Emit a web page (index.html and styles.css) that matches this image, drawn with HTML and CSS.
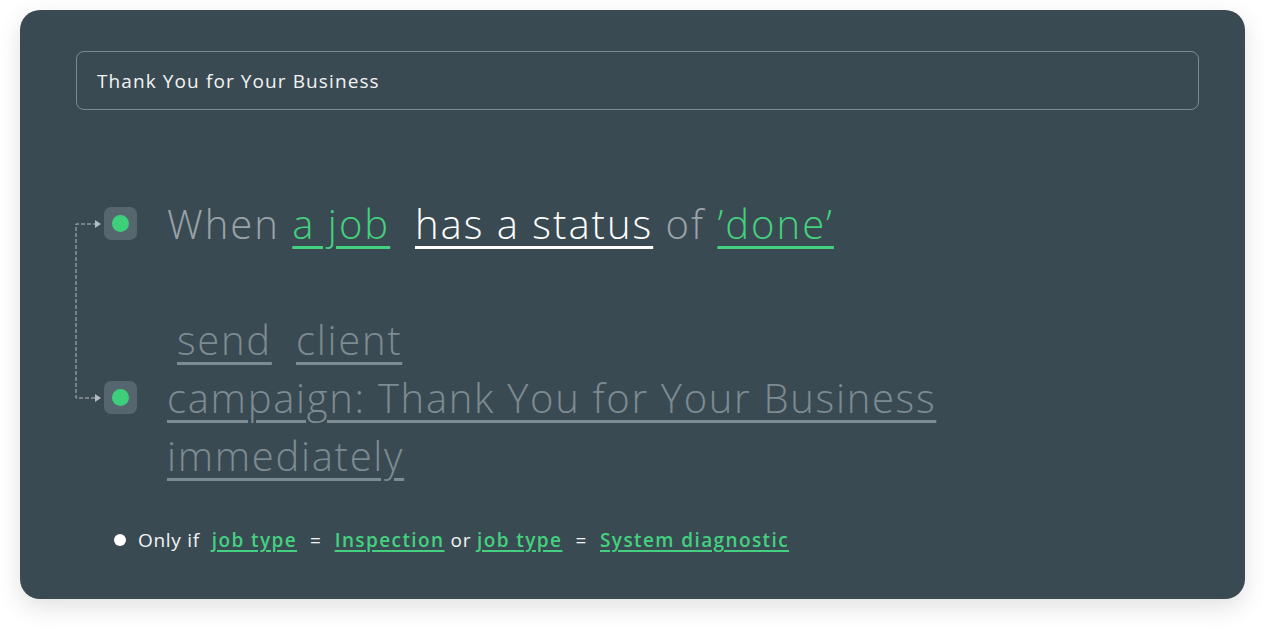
FILE: index.html
```html
<!DOCTYPE html>
<html lang="en">
<head>
    <meta charset="UTF-8">
    <meta name="viewport" content="width=device-width, initial-scale=1.0">
    <title>Automation - Thank You for Your Business</title>
    <link rel="stylesheet" href="styles.css">
</head>
<body>
    <div class="card">
        <div class="name-field">Thank You for Your Business</div>

        <div class="flow">
            <svg class="connector" width="40" height="190" viewBox="0 0 40 190">
                <path d="M27 8 H6 V182 H25" fill="none" stroke="#b3bbbf" stroke-width="1" stroke-dasharray="4 2"/>
                <path d="M25 4 L31 8 L25 12 Z" fill="#b3bbbf"/>
                <path d="M25 178 L31 182 L25 186 Z" fill="#b3bbbf"/>
            </svg>

            <div class="step">
                <div class="node"><span class="dot"></span></div>
                <div class="sentence trigger">
                    When <span class="link green">a job</span>&nbsp; <span class="link white">has a status</span> of <span class="link green">’done’</span>
                </div>
            </div>

            <div class="step action-step">
                <div class="node"><span class="dot"></span></div>
                <div class="sentence action">
                    <div class="line indent"><span class="link">send</span>&nbsp; <span class="link">client</span></div>
                    <div class="line"><span class="link">campaign: Thank You for Your Business</span></div>
                    <div class="line"><span class="link">immediately</span></div>
                </div>
            </div>
        </div>

        <div class="condition">
            <span class="bullet"></span>
            <span class="only">Only if</span>
            <span class="cond-link">job type</span>
            <span class="eq">=</span>
            <span class="cond-link">Inspection</span>
            <span>or</span>
            <span class="cond-link">job type</span>
            <span class="eq">=</span>
            <span class="cond-link">System diagnostic</span>
        </div>
    </div>
</body>
</html>
```

FILE: styles.css
```css
* {
    margin: 0;
    padding: 0;
    box-sizing: border-box;
}

body {
    background: #ffffff;
    font-family: 'Open Sans', 'Noto Sans', sans-serif;
    padding: 10px 20px 30px 20px;
}

.card {
    background: #3a4a52;
    border-radius: 20px;
    height: 589px;
    padding: 41px 46px 0 56px;
    box-shadow: 0 8px 24px rgba(0, 0, 0, 0.12);
}

.name-field {
    height: 59px;
    border: 1px solid #7c8b92;
    border-radius: 8px;
    padding: 0 20px;
    display: flex;
    align-items: center;
    color: #f2f4f5;
    font-size: 19px;
    letter-spacing: 1.1px;
}

.flow {
    position: relative;
    margin-top: 85px;
    padding-left: 28px;
}

.connector {
    position: absolute;
    left: -6px;
    top: 21px;
}

.step {
    display: flex;
    align-items: flex-start;
    gap: 30px;
}

.node {
    width: 33px;
    height: 33px;
    border-radius: 7px;
    background: #56666e;
    display: flex;
    align-items: center;
    justify-content: center;
    flex-shrink: 0;
    margin-top: 12px;
}

.dot {
    width: 17px;
    height: 17px;
    border-radius: 50%;
    background: #3ecf7b;
}

.sentence {
    font-size: 40px;
    font-weight: 300;
    line-height: 58px;
    letter-spacing: 1.7px;
}

.trigger {
    color: #9aa3a8;
    letter-spacing: 2px;
}

.link {
    text-decoration: underline;
    text-decoration-thickness: 3px;
    text-underline-offset: 7px;
}

.green {
    color: #43d17f;
}

.white {
    color: #ffffff;
}

.action-step {
    margin-top: 58px;
}

.action-step .node {
    margin-top: 70px;
}

.action {
    color: #7d8b92;
}

.indent {
    padding-left: 10px;
}

.condition {
    margin-top: 42px;
    margin-left: 38px;
    display: flex;
    align-items: center;
    gap: 6px;
    color: #f2f4f5;
    font-size: 19px;
    line-height: 26px;
    letter-spacing: 0.7px;
}

.bullet {
    width: 12px;
    height: 12px;
    border-radius: 50%;
    background: #ffffff;
    margin-right: 6px;
}

.only {
    margin-right: 6px;
}

.cond-link {
    color: #43d17f;
    font-weight: 600;
    letter-spacing: 1.4px;
    text-decoration: underline;
    text-decoration-thickness: 2px;
    text-underline-offset: 3px;
}

.eq {
    margin: 0 7px;
}
```
